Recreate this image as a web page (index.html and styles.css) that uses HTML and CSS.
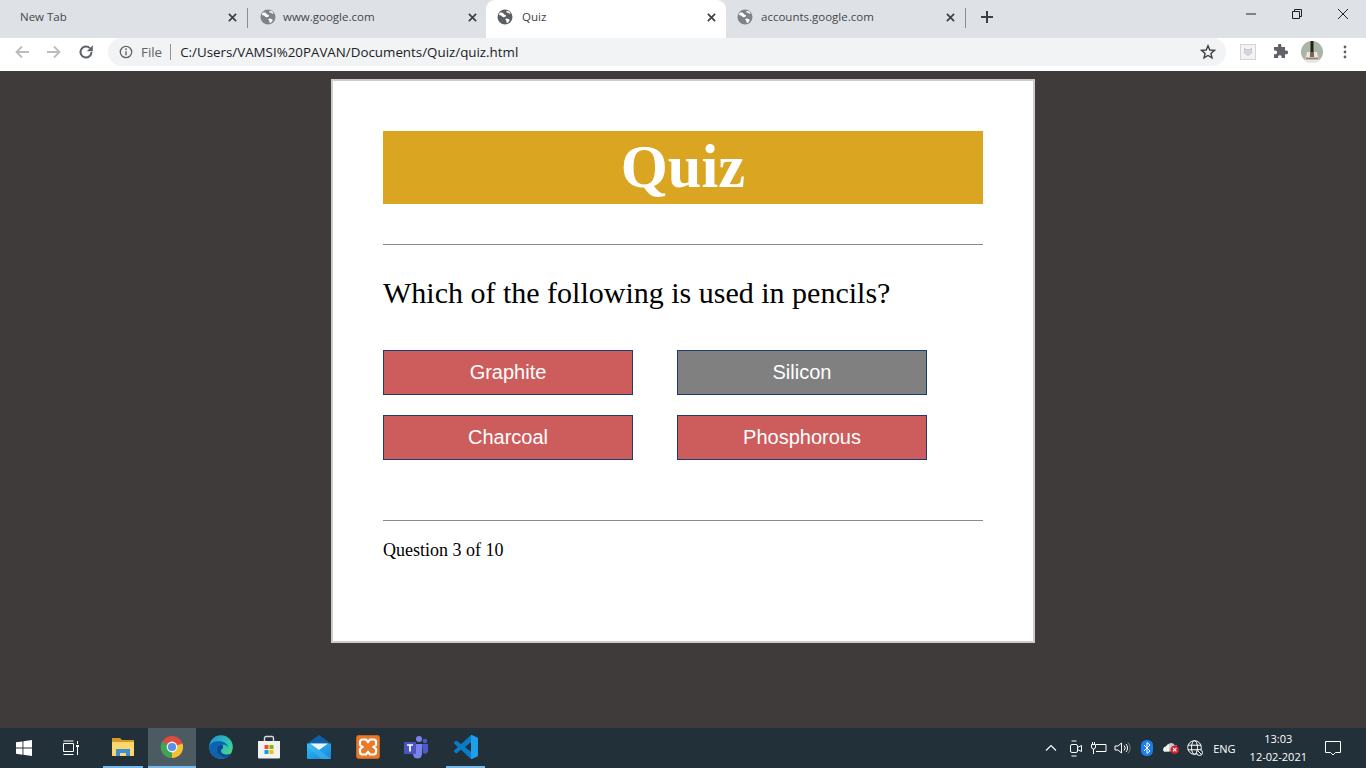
FILE: index.html
```html
<!DOCTYPE html>
<html lang="en">
<head>
<meta charset="utf-8">
<title>Quiz</title>
<link rel="stylesheet" href="styles.css">
</head>
<body>
<svg class="defs" width="0" height="0" aria-hidden="true">
  <defs>
    <symbol id="globe" viewBox="0 0 16 16">
      <circle cx="8" cy="8" r="7.500" fill="currentColor"/>
      <path d="M3 3.500l3 .2 1 1.800 2 .4-.7 2-2.300.4L4 6.500 2 6 2.500 4zM9 9.500l3 .5.7 1.500-2 2.600-1.200-.6-.3-2-1-1zM9.500 1.800l2.800.6 1.300 2-1.600.3-.7-1-1.800-.2z" fill="#fff"/>
    </symbol>
    <symbol id="close" viewBox="0 0 10 10">
      <path d="M1 1l8 8M9 1l-8 8" stroke="currentColor" stroke-width="1.900" fill="none"/>
    </symbol>
    <linearGradient id="edgeRing" x1="0" y1="0" x2="1" y2="1">
      <stop offset="0" stop-color="#1d8fd8"/><stop offset=".55" stop-color="#2fc4b2"/><stop offset="1" stop-color="#5ed66f"/>
    </linearGradient>
    <linearGradient id="mailBody" x1="0" y1="0" x2="1" y2="1">
      <stop offset="0" stop-color="#2bbcf3"/><stop offset="1" stop-color="#1a86d8"/>
    </linearGradient>
  </defs>
</svg>
<header class="chrome">
  <div class="tabstrip">
    <div class="tab tab-first"><span class="tab-title">New Tab</span><svg class="tab-x"><use href="#close"/></svg></div>
    <div class="sep"></div>
    <div class="tab"><svg class="fav"><use href="#globe"/></svg><span class="tab-title">www.google.com</span><svg class="tab-x"><use href="#close"/></svg></div>
    <div class="tab tab-active"><svg class="fav fav-dark"><use href="#globe"/></svg><span class="tab-title">Quiz</span><svg class="tab-x"><use href="#close"/></svg></div>
    <div class="tab tab-last"><svg class="fav"><use href="#globe"/></svg><span class="tab-title">accounts.google.com</span><svg class="tab-x"><use href="#close"/></svg></div>
    <div class="sep"></div>
    <svg class="plus" viewBox="0 0 12 12"><path d="M6 0v12M0 6h12" stroke="#3c4043" stroke-width="2" fill="none"/></svg>
    <div class="winctl">
      <svg class="win" viewBox="0 0 12 12"><path d="M1 6h10" stroke="#222" stroke-width="1" fill="none"/></svg>
      <svg class="win" viewBox="0 0 12 12"><path d="M3.500 3.500V1.500h7v7h-2M1.500 3.500h7v7h-7z" stroke="#222" stroke-width="1" fill="none"/></svg>
      <svg class="win" viewBox="0 0 12 12"><path d="M1 1l10 10M11 1L1 11" stroke="#222" stroke-width="1" fill="none"/></svg>
    </div>
  </div>
  <div class="toolbar">
    <svg class="nav" viewBox="0 0 16 16"><path d="M15 8H2.500M8 2.500L2.500 8 8 13.500" stroke="#babcbe" stroke-width="1.800" fill="none"/></svg>
    <svg class="nav" viewBox="0 0 16 16"><path d="M1 8h12.500M8 2.500L13.500 8 8 13.500" stroke="#babcbe" stroke-width="1.800" fill="none"/></svg>
    <svg class="nav" viewBox="0 0 16 16"><path d="M13.500 8a5.500 5.500 0 1 1-1.600-3.900" stroke="#5f6368" stroke-width="2" fill="none"/><path d="M14.800 1.200v6h-6z" fill="#5f6368"/></svg>
    <div class="omnibox">
      <svg class="info" viewBox="0 0 14 14"><circle cx="7" cy="7" r="5.700" stroke="#5f6368" stroke-width="1.300" fill="none"/><path d="M7 6.200v4" stroke="#5f6368" stroke-width="1.400"/><circle cx="7" cy="4.200" r=".9" fill="#5f6368"/></svg>
      <span class="scheme">File</span>
      <span class="omni-sep"></span>
      <span class="url">C:/Users/VAMSI%20PAVAN/Documents/Quiz/quiz.html</span>
      <svg class="star" viewBox="0 0 16 16"><path d="M8 1.800l1.800 4.200 4.600.4-3.500 3 1.100 4.500L8 11.500l-4 2.400 1.100-4.500-3.500-3 4.600-.4z" stroke="#3c4043" stroke-width="1.400" fill="none"/></svg>
    </div>
    <svg class="ext-box" viewBox="0 0 16 16"><rect x=".5" y=".5" width="15" height="15" fill="#f1f3f4" stroke="#d3d5d8"/><path d="M4.500 4.500l1.500 1h4l1.500-1v4.500l-3.500 2.500-3.500-2.500z" fill="#d7dadc" stroke="#c4c7ca"/></svg>
    <svg class="puzzle" viewBox="0 0 16 16"><path d="M6 1.500a1.700 1.700 0 0 1 3.400 0V3H13v3.600h1.300a1.800 1.800 0 0 1 0 3.600H13V14H9.600v-1.300a1.800 1.800 0 0 0-3.500 0V14H2v-3.800h1.300a1.800 1.800 0 0 0 0-3.600H2V3h4z" fill="#5f6368"/></svg>
    <svg class="avatar" viewBox="0 0 22 22"><circle cx="11" cy="11" r="11" fill="#a9b5a6"/><path d="M4 20l2-9 10 0 2 9a11 11 0 0 1-14 0z" fill="#e8e7e2"/><rect x="9.500" y="0" width="3" height="11" fill="#23211f"/><rect x="9" y="11" width="4" height="5" fill="#7b6455"/><rect x="5" y="16.500" width="12" height="2" fill="#8f8a78"/></svg>
    <svg class="menu" viewBox="0 0 4 14"><circle cx="2" cy="2" r="1.400" fill="#5f6368"/><circle cx="2" cy="7" r="1.400" fill="#5f6368"/><circle cx="2" cy="12" r="1.400" fill="#5f6368"/></svg>
  </div>
</header>

<main class="viewport">
  <section class="card">
    <h1 class="title">Quiz</h1>
    <hr class="rule">
    <p class="question">Which of the following is used in pencils?</p>
    <div class="answers">
      <button class="answer">Graphite</button>
      <button class="answer answer-grey">Silicon</button>
      <button class="answer">Charcoal</button>
      <button class="answer">Phosphorous</button>
    </div>
    <hr class="rule rule-lower">
    <p class="progress">Question 3 of 10</p>
  </section>
</main>

<footer class="taskbar">
  <svg class="tb-start" viewBox="0 0 16 16"><path d="M0 2.300l6.500-.9v6.200H0zM7.400 1.300L16 0v7.600H7.400zM0 8.500h6.500v6.200L0 13.700zM7.400 8.500H16V16l-8.600-1.200z" fill="#fff"/></svg>
  <svg class="tb-view" viewBox="0 0 16 16"><path d="M.5 3.500h10v8H.5zM.5 1h10M.5 14.500h10M14.500 1v3M14.500 7v8" stroke="#fff" stroke-width="1" fill="none"/><rect x="13" y="5" width="3" height="2" fill="#fff"/></svg>
  <div class="app app-open app-files">
    <svg viewBox="0 0 22 20"><path d="M0 1h8l2 2h12v15a1 1 0 0 1-1 1H1a1 1 0 0 1-1-1z" fill="#d99a25"/><path d="M0 5h22v13a1 1 0 0 1-1 1H1a1 1 0 0 1-1-1z" fill="#fbd76e"/><path d="M4 19v-7h14v7h-4v-3H8v3z" fill="#3f8dd4"/></svg>
  </div>
  <div class="app app-open app-active">
    <svg viewBox="0 0 24 24"><circle cx="12" cy="12" r="11" fill="#dd4b3e"/><path d="M12 12L22.500 8.500A11 11 0 0 1 12 23z" fill="#f2c230"/><path d="M12 12L12 23A11 11 0 0 1 2.200 6.500z" fill="#3ea556"/><circle cx="12" cy="12" r="5.400" fill="#f4f5f5"/><circle cx="12" cy="12" r="4.100" fill="#5a8fe6"/></svg>
  </div>
  <div class="app app-edge">
    <svg viewBox="0 0 24 24"><circle cx="12" cy="12" r="11.800" fill="url(#edgeRing)"/><path d="M.2 12c0 7 5.500 11.800 11.800 11.800 2.500 0 5-.8 7-2.300-6 2-11.500-1.500-11.500-6.500 0-3 2.500-5.500 6-5.500 3 0 5 1.500 5.500 3.500.3-2-1.500-5.500-6-6.500C7 5.500.6 7.500.2 12z" fill="#0e62b0"/><path d="M13.500 9.500c-3.500 0-6 2.500-6 5.500 0 5 5.500 8.500 11.500 6.500 1-.7 2-1.700 2.700-2.700-4 1.700-9.700.7-9.700-3.300 0-1.300 1.500-1.500 2-2.500.5-1.300-.5-3.500-.5-3.500z" fill="#0b4a96"/></svg>
  </div>
  <div class="app">
    <svg viewBox="0 0 24 24"><path d="M7.500 7V3A1.500 1.500 0 0 1 9 1.500h6A1.500 1.500 0 0 1 16.500 3v4" stroke="#d9d9d9" stroke-width="1.400" fill="none"/><path d="M1 6h22v16.500a1 1 0 0 1-1 1H2a1 1 0 0 1-1-1z" fill="#f2f2f2"/><rect x="7.500" y="10" width="4" height="4" fill="#f25022"/><rect x="12.500" y="10" width="4" height="4" fill="#7fba00"/><rect x="7.500" y="15" width="4" height="4" fill="#00a4ef"/><rect x="12.500" y="15" width="4" height="4" fill="#ffb900"/></svg>
  </div>
  <div class="app app-mail">
    <svg viewBox="0 0 24 24"><path d="M0 8.500L12 0l12 8.500z" fill="#0c5fa8"/><path d="M0 8.500h24V23a1 1 0 0 1-1 1H1a1 1 0 0 1-1-1z" fill="url(#mailBody)"/><path d="M3 8.500h18L12 15z" fill="#f0f4f7"/><path d="M12 15l12 9h-9L0 12V8.500z" fill="#49c4f4" opacity=".45"/></svg>
  </div>
  <div class="app app-xampp">
    <svg viewBox="0 0 24 24"><rect x=".5" y=".5" width="23" height="23" rx="2" fill="#e87a2a" stroke="#c8611c"/><path d="M6.500 4.500h3.500l2 2.500 2-2.500h3.500A2.500 2.500 0 0 1 20 7v3l-2.500 2 2.500 2v3a2.500 2.500 0 0 1-2.500 2.500H14L12 17l-2 2.500H6.500A2.500 2.500 0 0 1 4 17v-3l2.500-2L4 10V7a2.500 2.500 0 0 1 2.500-2.500z" fill="none" stroke="#fff" stroke-width="2.200"/></svg>
  </div>
  <div class="app">
    <svg viewBox="0 0 24 24"><circle cx="15" cy="4" r="3" fill="#7b83eb"/><circle cx="21" cy="6" r="2.300" fill="#5059c9"/><path d="M9 9h9v10a4.500 4.500 0 0 1-9 0z" fill="#7b83eb"/><path d="M18 9h6v7a3 3 0 0 1-5 2z" fill="#5059c9"/><rect x="0" y="7" width="12" height="12" rx="1" fill="#4b53bc"/><path d="M3 10h6M6 10v6.500" stroke="#fff" stroke-width="1.700" fill="none"/></svg>
  </div>
  <div class="app app-open app-code">
    <svg viewBox="0 0 24 24"><path d="M23.150 2.587L18.210.21a1.494 1.494 0 0 0-1.705.29l-9.460 8.630-4.120-3.128a.999.999 0 0 0-1.276.057L.327 7.261A1 1 0 0 0 .326 8.740L3.899 12 .326 15.260a1 1 0 0 0 .001 1.479L1.650 17.940a.999.999 0 0 0 1.276.057l4.120-3.128 9.460 8.630a1.492 1.492 0 0 0 1.704.29l4.942-2.377A1.500 1.500 0 0 0 24 20.060V3.939a1.500 1.500 0 0 0-.85-1.352zm-5.146 14.861L10.826 12l7.178-5.448v10.896z" fill="#0a7cc7"/><path d="M17 .1c.4-.1.800 0 1.210.11l4.940 2.377A1.500 1.500 0 0 1 24 3.939V20.060a1.500 1.500 0 0 1-.85 1.353l-4.940 2.377c-.4.150-.8.200-1.210.110z" fill="#1f9fe8"/></svg>
  </div>
  <div class="tray">
    <svg class="t-chev" viewBox="0 0 12 8"><path d="M1 6.500L6 1.500l5 5" stroke="#fff" stroke-width="1.100" fill="none"/></svg>
    <svg class="t-cam" viewBox="0 0 12 17"><rect x=".5" y="4.500" width="7" height="8" rx="1.500" stroke="#fff" fill="none"/><path d="M7.500 7.500l4-2v6l-4-2M1.500 1h5M1.500 16h5" stroke="#fff" fill="none"/></svg>
    <svg class="t-bat" viewBox="0 0 16 12"><path d="M5 2.500h10v7H5M1.500 0v2.500M3.500 0v2.500M.5 2.500h4v2.500a2 2 0 0 1-4 0zM2.500 7v5" stroke="#fff" fill="none"/></svg>
    <svg class="t-vol" viewBox="0 0 17 14"><path d="M1 5h3l3.500-3v10L4 9H1z" stroke="#fff" fill="none"/><path d="M10 4.500a3.500 3.500 0 0 1 0 5M12 3a6 6 0 0 1 0 8" stroke="#fff" fill="none"/><path d="M14 1.500a8 8 0 0 1 0 11" stroke="#777" fill="none"/></svg>
    <svg class="t-bt" viewBox="0 0 12 16"><rect width="12" height="16" rx="5.500" fill="#1a7df0"/><path d="M3 5l6 6-3 2.500V2.500L9 5l-6 6" stroke="#fff" fill="none"/></svg>
    <svg class="t-cloud" viewBox="0 0 16 12"><path d="M1 9.500a3 3 0 0 1 2-5A5 5 0 0 1 12 3.500h2v6z" fill="#c9cccd"/><path d="M1 9.500a3 3 0 0 1 2-5 5 5 0 0 1 3-2v7z" fill="#f0f1f1"/><circle cx="11.700" cy="7.700" r="4.300" fill="#d4202c"/><path d="M10 6l3.400 3.400M13.400 6L10 9.400" stroke="#fff" stroke-width="1.100"/></svg>
    <svg class="t-net" viewBox="0 0 16 16"><circle cx="7.500" cy="7.500" r="6.800" stroke="#fff" fill="none"/><ellipse cx="7.500" cy="7.500" rx="3" ry="6.800" stroke="#fff" fill="none"/><path d="M1 5.200h13M1 9.800h13" stroke="#fff" fill="none"/><circle cx="12.500" cy="12.500" r="3" fill="#22303a" stroke="#fff"/><path d="M10.500 10.500l4 4" stroke="#fff"/></svg>
    <span class="t-lang">ENG</span>
    <div class="t-clock"><span>13:03</span><span>12-02-2021</span></div>
    <svg class="t-note" viewBox="0 0 16 16"><path d="M.5 1.500h15v11h-5L8 15l-2.500-2.500h-5z" stroke="#fff" fill="none"/></svg>
  </div>
</footer>
</body>
</html>
```
FILE: styles.css
```css
* { box-sizing: border-box; margin: 0; padding: 0; }
html, body { height: 100%; }
body { display: flex; flex-direction: column; width: 1366px; height: 768px; overflow: hidden; background: #3f3b3a; font-family: "Liberation Serif", serif; }
.defs { position: absolute; }

/* browser chrome */
.chrome { height: 71px; flex: none; font-family: "Open Sans", "Noto Sans", sans-serif; background: #fff; }
.tabstrip { display: flex; align-items: flex-start; height: 38px; background: #dee1e6; padding-left: 8px; }
.tab { width: 239px; height: 34px; display: flex; align-items: center; padding: 0 8px 0 12px; font-size: 11.500px; color: #45484c; flex: none; }
.tab-active { background: #fff; height: 38px; padding-bottom: 4px; border-radius: 9px 9px 0 0; color: #3c4043; width: 240px; padding-left: 11px; margin-left: -1px; }
.tab-last { width: 238px; margin-left: 1px; padding-left: 10px; }
.tab-title { flex: 1; white-space: nowrap; padding-bottom: 2px; }
.fav { width: 16px; height: 16px; margin-right: 7px; color: #7f8387; }
.fav-dark { color: #5b5e62; margin-right: 9px; }
.tab-last .fav { margin-right: 8px; }
.tab-x { width: 9px; height: 9px; color: #3c4043; margin-right: 2px; }
.sep { width: 1px; height: 20px; margin-top: 8px; background: #8a8d91; flex: none; }
.plus { width: 12px; height: 12px; margin: 11px 0 0 15px; }
.winctl { margin: 8px 0 0 auto; display: flex; gap: 34px; padding-right: 17px; }
.win { width: 12px; height: 12px; }

.toolbar { display: flex; align-items: center; height: 32px; padding: 0 0 4px 14px; background: #fff; }
.nav { width: 16px; height: 16px; margin-right: 16px; flex: none; }
.nav:nth-child(3) { margin-right: 14px; }
.omnibox { width: 1118px; height: 28px; background: #f1f3f4; border-radius: 14px; display: flex; align-items: center; padding: 0 10px 0 11px; font-size: 13.350px; flex: none; }
.info { width: 14px; height: 14px; flex: none; }
.scheme { margin-left: 8px; color: #5f6368; }
.omni-sep { width: 1px; height: 16px; background: #8f9296; margin: 0 9px 0 8px; }
.url { flex: 1; color: #202124; }
.star { width: 16px; height: 16px; }
.ext-box { width: 16px; height: 16px; margin-left: 14px; }
.puzzle { width: 16px; height: 16px; margin-left: 16px; }
.avatar { width: 22px; height: 22px; margin-left: 13px; }
.menu { width: 4px; height: 14px; margin-left: 20px; }

/* page */
.viewport { flex: 1; display: flex; justify-content: center; align-items: flex-start; padding-top: 8px; background: #3f3b3a; }
.card { width: 704px; height: 564px; background: #fff; border: 2px solid #ccc; padding: 50px 50px 0; }
.title { height: 73px; background: #daa520; color: #fff; font: bold 60.500px/72px "Liberation Serif", serif; text-align: center; }
.rule { border: 0; border-top: 1px solid #8b8b8b; height: 1px; margin-top: 40px; }
.question { font-size: 30px; line-height: 37px; margin-top: 29px; color: #000; }
.answers { display: grid; grid-template-columns: 250px 250px; column-gap: 44px; row-gap: 20px; margin-top: 39px; }
.answer { height: 45px; background: #cd5c5c; border: 1px solid #1d3c6e; color: #fff; font: 20px "Liberation Sans", Arial, sans-serif; }
.answer-grey { background: #808080; }
.rule-lower { margin-top: 60px; }
.progress { font-size: 18px; line-height: 21px; margin-top: 19px; color: #000; }

/* taskbar */
.taskbar { height: 40px; flex: none; background: #22303a; display: flex; align-items: stretch; font-family: "Open Sans", "Noto Sans", sans-serif; color: #fff; }
.tb-start { width: 16px; height: 16px; margin: 12px 0 0 16px; }
.tb-view { width: 16px; height: 16px; margin: 12px 24px 0 31px; }
.app { width: 48px; display: flex; align-items: center; justify-content: center; border-bottom: 2px solid transparent; }
.app svg { width: 24px; height: 24px; }
.app-files { width: 40px; margin-right: 5px; }
.app-files svg { width: 22px; height: 20px; }
.app-open { border-bottom-color: #76b9ed; }
.app-active { background: #4c5a62; }
.app-edge { margin-left: 1px; }
.app-mail { margin-left: 2px; }
.app-xampp { margin-left: 1px; }
.app-code { width: 39px; margin-left: 6px; }
.tray { margin-left: auto; display: flex; align-items: center; padding-right: 25px; }
.t-chev { width: 12px; height: 8px; }
.t-cam { width: 12px; height: 17px; margin-left: 13px; }
.t-bat { width: 16px; height: 12px; margin-left: 9px; }
.t-vol { width: 17px; height: 14px; margin-left: 7px; }
.t-bt { width: 12px; height: 16px; margin-left: 10px; }
.t-cloud { width: 16px; height: 12px; margin-left: 10px; }
.t-net { width: 16px; height: 16px; margin-left: 8px; }
.t-lang { font-size: 11px; margin-left: 10px; }
.t-clock { display: flex; flex-direction: column; align-items: center; font-size: 11px; line-height: 18px; margin-left: 14px; }
.t-note { width: 16px; height: 16px; margin-left: 18px; }
```
